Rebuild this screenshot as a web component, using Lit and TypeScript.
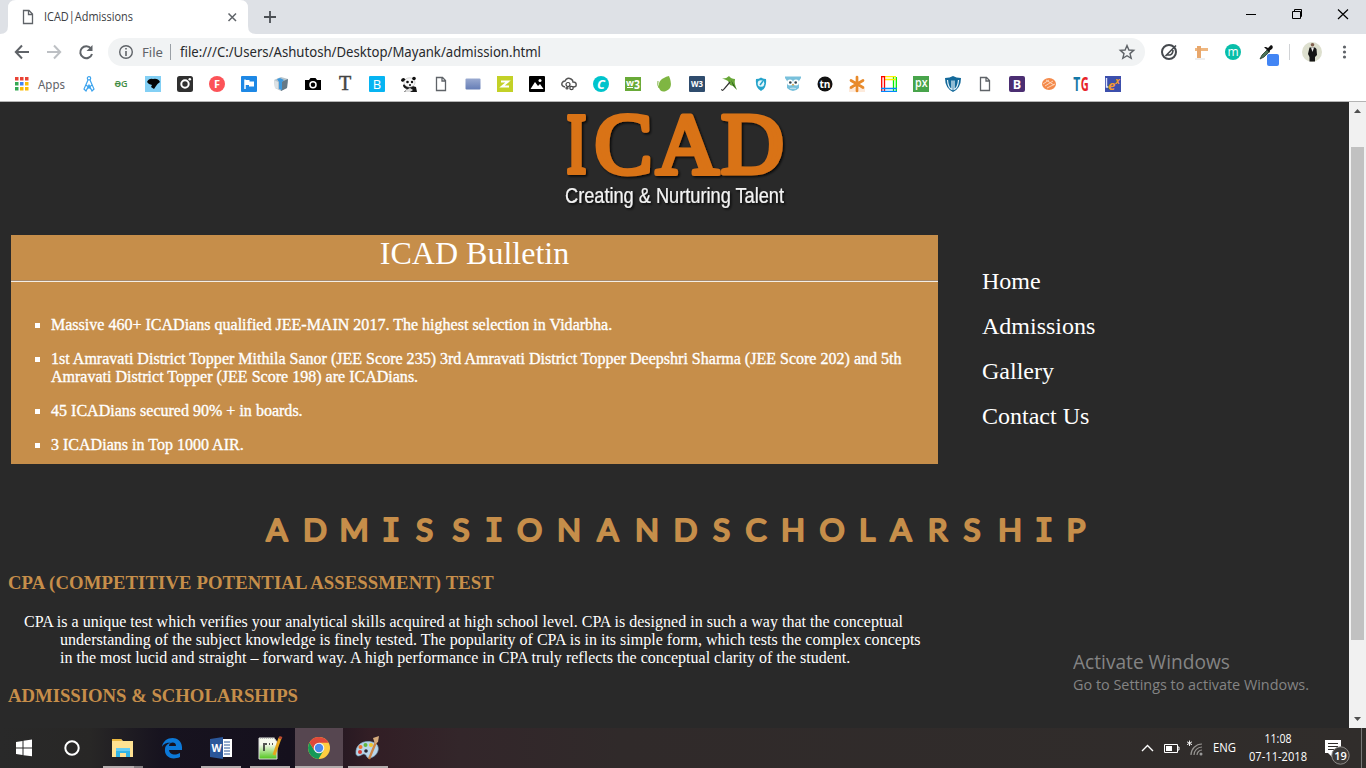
import { LitElement, html, svg, css } from "lit";
import { customElement } from "lit/decorators.js";

// Single-line label set to an exact advance width.
const label = (text: string, width: number, size: number, fill: string, height = 24, base = 17) => html`
  <svg class="label" width=${width + 2} height=${height}>
    <text x="0" y=${base} font-size=${size} fill=${fill} textLength=${width} lengthAdjust="spacingAndGlyphs">${text}</text>
  </svg>`;

const glyph = (s: string, size: number, fill: string, y = 12, extra = "700") =>
  svg`<text x="8" y=${y} font-size=${size} fill=${fill} font-weight=${extra} text-anchor="middle">${s}</text>`;

const page = svg`<path d="M3.500 1.500H9.500L12.500 4.500V14.500H3.500ZM9 1.500V5H12.500" fill="none" stroke="#5f6368" stroke-width="1.300"/>`;

const bookmarks = [
  svg`<g fill="none" stroke="#3ba3ee" stroke-width="1.200"><circle cx="8" cy="2.300" r="1.700"/><path d="M7 4L3 13L5 15L8 9L11 15L13 13L9 4M5 9L10 13M11 9L6 13"/></g>`,
  svg`<text x="1.500" y="10.500" font-size="9" font-weight="600" fill="#3f8c45" textLength="13" lengthAdjust="spacingAndGlyphs">ƏG</text>`,
  svg`<path d="M0 0H16V16H0Z" fill="#83d0f5"/><path d="M2 6Q4 2 8 3Q13 2 15 6Q12 8 11 10L9 13L6 11L7 9Q4 9 2 6Z" fill="#050505"/>`,
  svg`<rect width="16" height="16" rx="2.500" fill="#303030"/><circle cx="8" cy="8" r="3.700" fill="none" stroke="#fff" stroke-width="2"/><circle cx="12.800" cy="3.200" r="1.300" fill="#fff"/>`,
  svg`<circle cx="8" cy="8" r="8" fill="#fc5358"/>${glyph("F", 11, "#fff")}`,
  svg`<rect width="16" height="16" rx="1" fill="#1e88e5"/><path d="M4 3.500V13" stroke="#fff" stroke-width="1.500"/><path d="M4 4H8.500V5.500H13V10.500H8V9H4Z" fill="#fff"/>`,
  svg`<path d="M1 4L8 1L15 3L14 12L8 15L2 12Z" fill="#b7c4cc"/><path d="M8 6L15 3L14 12L8 15Z" fill="#657987"/><path d="M4 3L7 2L11 4L9 6V14L6 13V6Z" fill="#3f99dc"/><path d="M1 4L5 6V13L2 12Z" fill="#dce2e5"/>`,
  svg`<path d="M1 4H4L5.500 2H10.500L12 4H16V14H0V4Z" fill="#000"/><circle cx="8" cy="8.700" r="3" fill="none" stroke="#fff" stroke-width="1.500"/>`,
  svg`<text class="serif" x="8" y="14" font-size="20" fill="#444" stroke="#444" stroke-width=".5" text-anchor="middle">T</text>`,
  svg`<rect width="16" height="16" rx="1" fill="#06b4f2"/><text x="8" y="12.500" font-size="13" fill="#fff" text-anchor="middle">B</text>`,
  svg`<path d="M2 9Q4 7 8 9L15 11L16 16H3L6 13Q2 12 2 9Z" fill="#151515"/><ellipse cx="8.500" cy="6.500" rx="5.500" ry="4.700" fill="#f7f7f7" stroke="#aaa" stroke-width=".5"/><path d="M0 5Q0 2 3 2L4.500 3.500L2 6Z" fill="#111"/><circle cx="13" cy="2.500" r="1.800" fill="#111"/><circle cx="6.500" cy="6" r="1.300" fill="#111"/><circle cx="11" cy="6" r="1.200" fill="#111"/><circle cx="9" cy="9" r="1" fill="#111"/><path d="M5 14L9 12L12 14L9 16H4Z" fill="#ddd"/>`,
  page,
  svg`<defs><linearGradient id="bl" x2="0" y2="1"><stop stop-color="#9aaad0"/><stop offset="1" stop-color="#657db6"/></linearGradient></defs><rect x=".5" y="2.500" width="15" height="11" rx="1" fill="url(#bl)"/>`,
  svg`<path d="M0 0H16V16H0Z" fill="#c3d127"/><path d="M4 5.500H11L5 10.500H12" fill="none" stroke="#fff" stroke-width="2"/>`,
  svg`<rect width="16" height="16" rx="1" fill="#000"/><path d="M1.500 13L6 6L9 10L11 8L14.500 13Z" fill="#fff"/><circle cx="11" cy="4.500" r="1.500" fill="#fff"/>`,
  svg`<path d="M4 11Q0 10 1 7Q2 5 4 5Q6 1 10 3Q12 4 12 6Q16 6 15 10Q14 11 12 11" fill="none" stroke="#555" stroke-width="1.500"/><g fill="none" stroke="#444" stroke-width="1.200"><circle cx="7" cy="8.500" r="2"/><circle cx="10.500" cy="12" r="1.700"/><circle cx="6" cy="12" r="1"/></g>`,
  svg`<circle cx="8" cy="8" r="8" fill="#00c4cc"/><text x="8" y="12.500" font-size="13" font-style="italic" font-weight="700" fill="#fff" text-anchor="middle">C</text>`,
  svg`<rect y="1" width="16" height="14" fill="#69aa38"/><text x="1" y="10" font-size="8" font-weight="700" fill="#fff" textLength="8" lengthAdjust="spacingAndGlyphs">w</text><text x="9" y="12.500" font-size="12" font-weight="700" fill="#fff" textLength="6" lengthAdjust="spacingAndGlyphs">3</text><path d="M2 11.500H8" stroke="#fff"/>`,
  svg`<path d="M12 0Q17 12 9 15Q4 17 2 12Q0 3 12 0Z" fill="#7fb642"/><path d="M1 5Q0 9 2 12" stroke="#7fb642" fill="none"/>`,
  svg`<rect width="16" height="16" rx="1" fill="#2f4c6d"/><text x="2" y="11" font-size="8.500" font-weight="700" fill="#fff" textLength="12" lengthAdjust="spacingAndGlyphs">W3</text>`,
  svg`<path d="M1 2.500Q5 3 8 0Q10 3 14 3Q13 8 16 14L12 10L9 9L7 5Q4 3 1 2.500Z" fill="#68a738"/><path d="M10 4L16 14L12 9.500Z" fill="#285a1c"/><path d="M9 6L3 13Q1 16 .7 13" stroke="#333" fill="none" stroke-width="1.200"/>`,
  svg`<path d="M3 3Q6 3 8 1.500Q10 3 13 3Q14 12 8 15Q2 12 3 3Z" fill="#27a4cb"/><circle cx="8" cy="7.500" r="3.300" fill="#e5f7fc"/><path d="M7 9L10 5" stroke="#27a4cb" stroke-width="1.500"/>`,
  svg`<path d="M0 .5H16V2L14 5V12Q8 18 2 12V5L0 2Z" fill="#78c0db"/><circle cx="5" cy="6.500" r="3" fill="#fff"/><circle cx="11" cy="6.500" r="3" fill="#fff"/><circle cx="5.300" cy="6.500" r="1.300" fill="#32424c"/><circle cx="10.700" cy="6.500" r="1.300" fill="#32424c"/><path d="M7 8H9L8 10.500Z" fill="#e9a240"/><path d="M5 12Q8 11 11 12V13H5Z" fill="#b8deec"/>`,
  svg`<circle cx="8" cy="8" r="7.500" fill="#111"/><text x="2.500" y="11.500" font-size="10" font-weight="700" fill="#fff" textLength="11" lengthAdjust="spacingAndGlyphs">tn</text>`,
  svg`<rect y="12" width="16" height="4" fill="#fdeadb"/><path d="M8 1V15M2 4.500L14 11.500M14 4.500L2 11.500" stroke="#e88a2b" stroke-width="2.700" stroke-linecap="round"/>`,
  svg`<g fill="none" stroke-width="1.300"><path d="M15.300 1V15M12.500 1V15" stroke="#0e0"/><path d="M1 .7H15M4 3.500H15" stroke="#fe0"/><path d="M.7 0V15M3.500 0V15M0 .7H4" stroke="#f00"/><path d="M0 12.500H16M0 15.300H16" stroke="#08f"/></g>`,
  svg`<rect width="16" height="16" fill="#48a44b"/><text x="2" y="11" font-size="12" font-weight="600" fill="#fff" textLength="12.500" lengthAdjust="spacingAndGlyphs">px</text>`,
  svg`<path d="M0 2Q5 2 8 0Q11 2 16 2Q16 12 8 16Q0 12 0 2Z" fill="#13699a"/><path d="M2.500 4Q3 12 7 13.500V4.500M13.500 4Q13 12 9 13.500V4.500" fill="none" stroke="#e6f4fb" stroke-width="1.200"/>`,
  page,
  svg`<rect width="16" height="16" rx="2" fill="#4b2e72"/>${glyph("B", 12.5, "#fff", 12.5)}`,
  svg`<ellipse cx="8" cy="8" rx="7" ry="6" fill="#f48a4b"/><path d="M2 8L8 4M4 10L12 5M6 12L14 8M5 4L13 9" stroke="#ffdcc5" stroke-width=".9"/>`,
  svg`<text x=".3" y="15" font-size="19" font-weight="700" fill="#1378a6" textLength="7" lengthAdjust="spacingAndGlyphs">T</text><text x="7.800" y="15" font-size="19" font-weight="700" fill="#e7252b" textLength="8" lengthAdjust="spacingAndGlyphs">G</text>`,
  svg`<rect width="16" height="16" fill="#3c4fac"/><path d="M1.500 2V11H3.500" stroke="#dfe6ff" fill="none" stroke-width="1.400"/><text x="3" y="14" font-size="13" font-style="italic" font-weight="700" fill="#f29a2d">e</text><text x="10" y="8" font-size="9" font-style="italic" font-weight="700" fill="#f29a2d">x</text>`,
];

@customElement("app-browser-chrome")
class BrowserChrome extends LitElement {
  static styles = css`
    :host { display: block; height: 102px; background: #fff; font-family: "Noto Sans", "Open Sans", sans-serif; }
    svg { display: block; flex: none; overflow: visible; }
    svg text { font-family: "Open Sans", sans-serif; }
    svg text.serif { font-family: "Liberation Serif", serif; }
    .label text { font-family: "Noto Sans", sans-serif; }
    .tabs { height: 34px; background: #dee1e6; display: flex; justify-content: space-between; }
    .bar { height: 36px; display: flex; align-items: center; padding-left: 14px; box-sizing: border-box; }
    .nav { display: flex; gap: 16px; margin-right: 14px; }
    .omni { width: 1037px; height: 28px; box-sizing: border-box; padding: 0 10px; border-radius: 14px; background: #f1f3f4; display: flex; align-items: center; }
    .file { margin-left: 8px; }
    .sep { width: 1px; height: 16px; background: #9aa0a6; margin: 0 9px 0 5px; }
    .grow { flex: 1; }
    .marks { height: 31px; display: flex; align-items: center; padding: 0 0 3px 15px; box-sizing: border-box; }
    .apps { margin-left: 9px; margin-right: 14px; }
    .icons { display: flex; gap: 16px; }
    .line { height: 1px; background: #b4b4b4; }
  `;
  render() {
    return html`
      <div class="tabs">
        <svg width="290" height="34">
          <path d="M0 34Q8 34 8 26V8Q8 0 16 0H240Q248 0 248 8V26Q248 34 256 34Z" fill="#fff"/>
          <path d="M23.500 10.500H29L32.500 14V23.500H23.500ZM28.500 10.500V14.500H32.500" fill="none" stroke="#5f6368" stroke-width="1.300"/>
          <text x="44" y="21" font-size="12" fill="#3c4043" textLength="89" lengthAdjust="spacingAndGlyphs">ICAD|Admissions</text>
          <path d="M228.500 13.500L236 21M236 13.500L228.500 21" stroke="#5f6368" stroke-width="1.500"/>
          <path d="M264 17H276M270 11V23" stroke="#4b4f54" stroke-width="1.800"/>
        </svg>
        <svg width="130" height="34">
          <path d="M10 14.500H20" stroke="#000"/>
          <path d="M56.500 11.500H64.500V18.500H56.500ZM58.500 11V9.500H65.500V16.500H65" fill="none" stroke="#000"/>
          <path d="M102 9.500L112 19M112 9.500L102 19" stroke="#000" stroke-width="1.200"/>
        </svg>
      </div>
      <div class="bar">
        <div class="nav">
          <svg width="16" height="16" fill="none" stroke="#5f6368" stroke-width="2"><path d="M15 8H2M8 1.500L1.800 8L8 14.500"/></svg>
          <svg width="16" height="16" fill="none" stroke="#bdc0c4" stroke-width="2"><path d="M1 8H14M8 1.500L14.200 8L8 14.500"/></svg>
          <svg width="16" height="16"><path d="M13 4.500A6 6 0 1 0 14 10" fill="none" stroke="#5f6368" stroke-width="2"/><path d="M14.500 1V7H8.500Z" fill="#5f6368"/></svg>
        </div>
        <div class="omni">
          <svg width="16" height="16"><circle cx="8" cy="8" r="6.300" fill="none" stroke="#5f6368" stroke-width="1.400"/><path d="M8 7V12M8 4V5.500" stroke="#5f6368" stroke-width="1.600"/></svg>
          <span class="file">${label("File", 21, 13, "#5f6368")}</span>
          <span class="sep"></span>
          ${label("file:///C:/Users/Ashutosh/Desktop/Mayank/admission.html", 361, 13.5, "#27292c")}
          <span class="grow"></span>
          <svg width="16" height="16"><path d="M8 1.500L9.900 6L14.700 6.400L11 9.600L12.200 14.300L8 11.700L3.800 14.300L5 9.600L1.300 6.400L6.100 6Z" fill="none" stroke="#5f6368" stroke-width="1.400"/></svg>
        </div>
        <svg width="221" height="36">
          <circle cx="24" cy="18" r="7" fill="none" stroke="#45494e" stroke-width="2"/><path d="M20.500 22L31 11.500M21 21H25Q28 20 28 16" stroke="#45494e" stroke-width="1.600" fill="none"/>
          <path d="M50 14H63V17H50Z" fill="#efb780"/><path d="M52 12H56V24H52Z" fill="#e8a76c"/><path d="M50 25H60" stroke="#eee" stroke-width="2"/>
          <circle cx="88" cy="18" r="8" fill="#08bea9"/><text x="88" y="22" font-size="12" fill="#fff" text-anchor="middle">m</text>
          <path d="M115 25L117 21L123 15L125 17L119 23Z" fill="#4c7457" stroke="#263b2b" stroke-width=".8"/><path d="M121 13L123 14L126 11Q129 12 127 15L124 17L125 19L119 13Z" fill="#111"/>
          <rect x="122" y="20" width="12" height="12" rx="2" fill="#4285f4"/>
          <path d="M144.500 10V26" stroke="#d1d3d6"/>
          <circle cx="167" cy="18" r="10" fill="#dddfce"/><circle cx="167.500" cy="10.800" r="1.800" fill="#80604f"/><path d="M164.500 13.500H170L171.500 15L172 21L170 23V27.500H164.500V23L163 20Z" fill="#151515"/><path d="M166 13.500H169L167.500 18Z" fill="#eee"/>
          <g fill="#5f6368"><circle cx="199.500" cy="13" r="1.600"/><circle cx="199.500" cy="18" r="1.600"/><circle cx="199.500" cy="23" r="1.600"/></g>
        </svg>
      </div>
      <div class="marks">
        <svg width="14" height="14"><path d="M0 0H3.500V3.500H0ZM5 0H8.500V3.500H5ZM10 0H13.500V3.500H10Z" fill="#e94335"/><path d="M0 5H3.500V8.500H0ZM0 10H3.500V13.500H0Z" fill="#34a853"/><path d="M5 5H8.500V8.500H5Z" fill="#4285f4"/><path d="M10 5H13.500V8.500H10ZM5 10H8.500V13.500H5ZM10 10H13.500V13.500H10Z" fill="#fbbc05"/></svg>
        <span class="apps">${label("Apps", 27, 12.5, "#5f6368", 24, 16.5)}</span>
        <div class="icons">${bookmarks.map((b) => html`<svg width="16" height="16">${b}</svg>`)}</div>
      </div>
      <div class="line"></div>`;
  }
}

@customElement("app-site")
class Site extends LitElement {
  static styles = css`
    :host { display: flex; height: 626px; overflow: hidden; background: #292929; color: #fff; font: 16px/18px "Liberation Serif", serif; position: relative; }
    svg { display: block; }
    .content { width: 1349px; flex: none; overflow: hidden; }
    .row { display: flex; padding: 0 0 0 11px; }
    .bulletin { width: 927px; height: 229px; background: #c68e4a; }
    .title { font-size: 32px; line-height: 37px; font-weight: 400; text-align: center; margin: 0; height: 45px; }
    .rule { background: #f3eee6; border-top: 1px solid #a7896a; box-sizing: border-box; height: 2px; }
    .list { list-style: none; margin: 34px 0 0; padding: 0 30px 0 40px; display: flex; flex-direction: column; gap: 16px; letter-spacing: 0.012px; -webkit-text-stroke: 0.35px #fff; }
    .item { display: grid; grid-template-columns: 16px 1fr; margin-left: -16px; }
    .dot { width: 5px; height: 5px; background: #fff; margin-top: 7px; }
    .menu { font-size: 24px; line-height: 27px; display: flex; flex-direction: column; gap: 18px; padding: 33px 0 0 44px; }
    .banner { margin-top: 43px; }
    h3 { font-size: 18.72px; line-height: 21px; color: #c68e4a; margin: 0; padding-left: 8px; }
    .wide { letter-spacing: 0.1px; }
    .prose { margin: 20px 0 18px; padding-left: 60px; width: 866px; text-indent: -36px; letter-spacing: 0.012px; }
    .mark { position: absolute; left: 1073px; top: 548px; }
    .mark text { font-family: "Open Sans", sans-serif; fill: #848484; }
  `;
  render() {
    const centers = "277 315 354 391 424.5 461 494 529.5 569 608 647 685.5 721.5 756 793 832 867 901 937.5 972 1010 1044 1076";
    const items = [
      "Massive 460+ ICADians qualified JEE-MAIN 2017. The highest selection in Vidarbha.",
      "1st Amravati District Topper Mithila Sanor (JEE Score 235) 3rd Amravati District Topper Deepshri Sharma (JEE Score 202) and 5th Amravati District Topper (JEE Score 198) are ICADians.",
      "45 ICADians secured 90% + in boards.",
      "3 ICADians in Top 1000 AIR.",
    ];
    const serifI = svg`<tspan font-family="DejaVu Sans Mono">I</tspan>`;
    return html`
      <div class="content">
        <svg width="1349" height="133">
          <defs><filter id="sh" x="-10%" y="-10%" width="120%" height="130%"><feDropShadow dx="1.500" dy="1.500" stdDeviation="1" flood-color="#000" flood-opacity=".8"/></filter></defs>
          <g font-family="Liberation Serif" font-size="87" fill="#d97318" stroke="#d97318" stroke-width="5" stroke-linejoin="round" filter="url(#sh)">
            <text x="566.500" y="70.500" font-weight="700" stroke-width="4" textLength="20" lengthAdjust="spacingAndGlyphs">I</text>
            <text x="623.500 687.500 752.500" y="70.500" text-anchor="middle">CAD</text>
          </g>
          <text x="565" y="101" font-family="Liberation Sans" font-size="22" fill="#f3f3f3" stroke="#f3f3f3" stroke-width=".15" textLength="219" lengthAdjust="spacingAndGlyphs" filter="url(#sh)">Creating &amp; Nurturing Talent</text>
        </svg>
        <div class="row">
          <section class="bulletin">
            <h1 class="title">ICAD Bulletin</h1>
            <div class="rule"></div>
            <ul class="list">${items.map((i) => html`<li class="item"><span class="dot"></span><span>${i}</span></li>`)}</ul>
          </section>
          <nav class="menu"><span>Home</span><span>Admissions</span><span>Gallery</span><span>Contact Us</span></nav>
        </div>
        <svg class="banner" width="1349" height="65">
          <text x=${centers} y="34" text-anchor="middle" font-family="Lato" font-weight="400" font-size="31.500" fill="#c68e4a" stroke="#c68e4a" stroke-width="2.200" stroke-linejoin="round">ADM${serifI}SS${serifI}ONANDSCHOLARSH${serifI}P</text>
        </svg>
        <h3 class="wide">CPA (COMPETITIVE POTENTIAL ASSESSMENT) TEST</h3>
        <p class="prose">CPA is a unique test which verifies your analytical skills acquired at high school level. CPA is designed in such a way that the conceptual understanding of the subject knowledge is finely tested. The popularity of CPA is in its simple form, which tests the complex concepts in the most lucid and straight – forward way. A high performance in CPA truly reflects the conceptual clarity of the student.</p>
        <h3>ADMISSIONS &amp; SCHOLARSHIPS</h3>
      </div>
      <svg width="17" height="626"><rect width="17" height="626" fill="#f1f1f1"/><rect x="2" y="45" width="13" height="493" fill="#c1c1c1"/><path d="M5 11H12L8.500 7ZM5 615H12L8.500 619Z" fill="#505050"/></svg>
      <svg class="mark" width="240" height="50">
        <text x="0" y="19" font-size="19.500" textLength="157" lengthAdjust="spacingAndGlyphs">Activate Windows</text>
        <text x="0" y="40" font-size="14.500" textLength="236" lengthAdjust="spacingAndGlyphs">Go to Settings to activate Windows.</text>
      </svg>`;
  }
}

@customElement("app-taskbar")
class Taskbar extends LitElement {
  static styles = css`
    :host { display: flex; justify-content: space-between; height: 40px; background: linear-gradient(90deg, #292929 0, #282726 90px, #17131f 160px, #15101d 290px, #321e25 370px, #33262a 460px, #302a2a 620px, #302d2b 1366px); }
    svg { display: block; }
    text { font-family: "Open Sans", sans-serif; fill: #fff; }
  `;
  render() {
    return html`
      <svg width="400" height="40">
        <path d="M16 14L22.500 13V19.500H16ZM23.500 12.800L32 11.500V19.500H23.500ZM16 20.500H22.500V27L16 26ZM23.500 20.500H32V28.300L23.500 27.200Z" fill="#fff"/>
        <circle cx="72" cy="20" r="6.700" fill="none" stroke="#fff" stroke-width="2"/>
        <path d="M112 11H121L123 13H133V29H112Z" fill="#ffe292"/><path d="M112 11H121L122 13H112Z" fill="#eab840"/><path d="M116 20H130V29H126V25H120V29H116Z" fill="#32b5e7"/><path d="M116 20H130V23H116Z" fill="#65cdf4"/>
        <path d="M162 19C163 8 181 6 182 19V22H169C170 28 177 27 180 25V29C171 33 164 28 165 21C165 18 168 15 171 15C166 14 163 17 162 19ZM169 18H176C176 13 169 14 169 18Z" fill="#0c79d8" fill-rule="evenodd"/>
        <path d="M222 11H232V29H222Z" fill="#fff"/><path d="M224 14H230M224 17H230M224 20H230M224 23H230M224 26H230" stroke="#2b579a"/><path d="M210 11L223 9V31L210 29Z" fill="#2b579a"/><text x="216.500" y="24" font-size="10.500" font-weight="700" text-anchor="middle">W</text>
        <defs><linearGradient id="np" x2="0" y2="1"><stop offset=".3" stop-color="#f6faed"/><stop offset="1" stop-color="#50c51b"/></linearGradient></defs>
        <path d="M259 10H274L277 14V31H259Z" fill="url(#np)" stroke="#ddd"/><path d="M260 10H275" stroke="#888" stroke-dasharray="1 1"/><path d="M264 15V23M265 16H267M269 16H270M272 16H273" stroke="#222" stroke-width="1.500"/><path d="M280 10L274 27" stroke="#e5a61c" stroke-width="3"/><path d="M281 8.500L280 11" stroke="#bb4a31" stroke-width="3"/>
        <path d="M295 0H343V40H295Z" fill="#564650"/>
        <g><circle cx="319" cy="20" r="11" fill="#ffcd40"/><path d="M319 20L309.500 14.500A11 11 0 0 1 328.600 14.700H319Z" fill="#df493b"/><path d="M309.500 14.500A11 11 0 0 0 318.500 31L323.600 22.500L319 20L314 22Z" fill="#159957"/><path d="M309.500 14.500L314 22L319 15Z" fill="#df493b"/><circle cx="319" cy="20" r="5.300" fill="#f5f5f5"/><circle cx="319" cy="20" r="4.200" fill="#4b89ee"/></g>
        <path d="M356 26C355 16 364 12 372 14C382 16 379 28 370 30C366 31 367 25 363 26C360 28 357 29 356 26Z" fill="#b9d6e9" stroke="#80adca" stroke-width=".7"/><circle cx="360" cy="24" r="2" fill="#d83b32"/><circle cx="360.500" cy="19" r="2" fill="#f0722f"/><circle cx="365.500" cy="17" r="2" fill="#60b63e"/><circle cx="371" cy="17" r="2" fill="#f1c52d"/><circle cx="366" cy="23" r="1.800" fill="#29252d"/><path d="M376 14L369 31" stroke="#cd8444" stroke-width="2.300"/><path d="M373 10L379 8L378 14L375 16Z" fill="#d4aa7c"/>
        <path d="M103 39H143M201 39H241M250 39H290M295 39H343M348 39H388" stroke="#b4aeae" stroke-width="2"/><path d="M134 39H143" stroke="#837f82" stroke-width="2"/>
      </svg>
      <svg width="240" height="40">
        <path d="M16 23L21.500 17.500L27 23" fill="none" stroke="#fff" stroke-width="1.400"/>
        <path d="M38.500 16.500H51.500V24.500H38.500ZM52 19H53V22H52" fill="none" stroke="#fff"/><path d="M40 18H46V23H40Z" fill="#fff"/>
        <g fill="none" stroke="#969491" stroke-width="1.200"><path d="M65 27A11 11 0 0 1 76 16M68 27A8 8 0 0 1 76 19M71 27A5 5 0 0 1 76 22"/></g><circle cx="75" cy="26" r="1.500" fill="#999"/><path d="M63.500 12.500V18M61 13.800L66 16.700M66 13.800L61 16.700" stroke="#fff" stroke-width=".9"/>
        <text x="87" y="24" font-size="12" textLength="23" lengthAdjust="spacingAndGlyphs">ENG</text>
        <text x="138.500" y="15" font-size="12" textLength="27" lengthAdjust="spacingAndGlyphs">11:08</text>
        <text x="123" y="33" font-size="12" textLength="58" lengthAdjust="spacingAndGlyphs">07-11-2018</text>
        <path d="M199 12H215V25H206V29L202 25H199Z" fill="#fff"/><path d="M202 15.500H212M202 18.500H212M202 21.500H208" stroke="#302d2b"/>
        <circle cx="214.500" cy="27.500" r="8.700" fill="#3c3a38" stroke="#8d8b89"/><text x="214.500" y="31.500" font-size="11" font-weight="600" text-anchor="middle">19</text>
        <path d="M235.500 0V40" stroke="#777"/>
      </svg>`;
  }
}

@customElement("app-root")
class Root extends LitElement {
  static styles = css`:host { display: block; width: 1366px; height: 768px; overflow: hidden; }`;
  render() {
    return html`<app-browser-chrome></app-browser-chrome><app-site></app-site><app-taskbar></app-taskbar>`;
  }
}
